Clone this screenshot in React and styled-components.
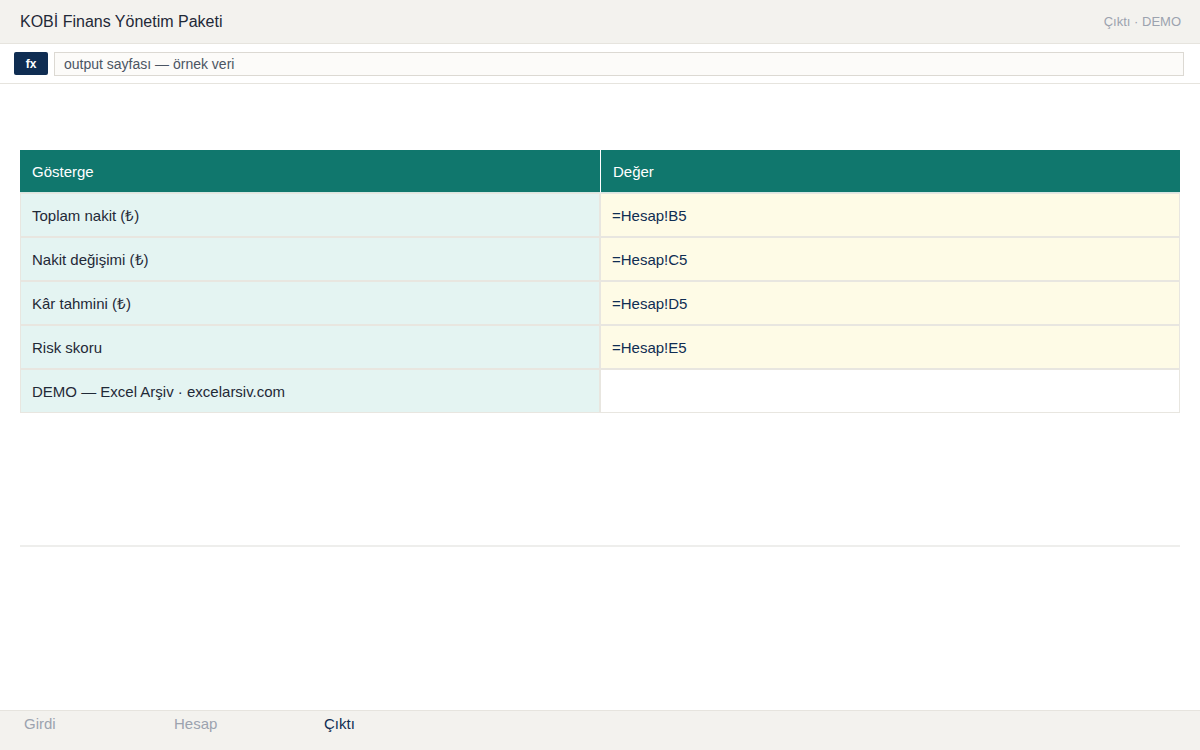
import React from "react";
import styled, { createGlobalStyle } from "styled-components";

const Global = createGlobalStyle`
  html, body { margin: 0; padding: 0; }
  body {
    font-family: "Liberation Sans", Arial, sans-serif;
    background: #fff;
  }
  * { box-sizing: border-box; }
`;

const Page = styled.div`
  height: 750px;
  display: flex;
  flex-direction: column;
`;

const Header = styled.header`
  height: 44px;
  flex-shrink: 0;
  background: #f3f2ee;
  border-bottom: 1px solid #e6e4de;
  display: flex;
  align-items: center;
  justify-content: space-between;
  padding: 0 19px 0 20px;
`;

const Title = styled.h1`
  margin: 0;
  font-size: 16px;
  font-weight: 400;
  color: #1f2937;
`;

const Meta = styled.span`
  font-size: 13px;
  color: #9ca3af;
`;

const FormulaBar = styled.div`
  height: 40px;
  flex-shrink: 0;
  border-bottom: 1px solid #e6e4de;
  display: flex;
  align-items: center;
  gap: 6px;
  padding: 0 16px 0 14px;
`;

const FxButton = styled.span`
  width: 34px;
  height: 23px;
  border-radius: 2px;
  background: #0f2d52;
  color: #fff;
  font-size: 12px;
  font-weight: 700;
  display: flex;
  align-items: center;
  justify-content: center;
`;

const FormulaInput = styled.div`
  flex: 1;
  height: 24px;
  border: 1px solid #dcd9d3;
  background: #fcfbf9;
  font-size: 14px;
  color: #4b5563;
  display: flex;
  align-items: center;
  padding: 0 9px;
`;

const Main = styled.main`
  flex: 1;
  padding: 66px 20px 0;
`;

const Table = styled.table`
  width: 100%;
  border-collapse: separate;
  border-spacing: 0;
  table-layout: fixed;
  font-size: 15px;
`;

const Th = styled.th`
  height: 43px;
  background: #10776d;
  color: #fff;
  font-weight: 400;
  text-align: left;
  padding: 0 12px;
  border-left: ${(p) => (p.$first ? "none" : "1px solid #fff")};
  border-bottom: 1px solid #d6e6e2;
`;

const Td = styled.td`
  height: 44px;
  padding: 0 11px;
  background: ${(p) => p.$bg};
  color: ${(p) => p.$color};
  border: 1px solid #e8e6e0;
`;

const Divider = styled.hr`
  margin: 132px 0 0;
  border: none;
  border-top: 2px solid #eeeeec;
`;

const Tabs = styled.nav`
  height: 40px;
  flex-shrink: 0;
  background: #f3f2ee;
  border-top: 1px solid #e6e4de;
  display: flex;
`;

const Tab = styled.span`
  width: 150px;
  padding: 4px 0 0 24px;
  font-size: 15px;
  color: ${(p) => (p.$active ? "#0f2d52" : "#9ca3af")};
`;

const rows = [
  ["Toplam nakit (₺)", "=Hesap!B5"],
  ["Nakit değişimi (₺)", "=Hesap!C5"],
  ["Kâr tahmini (₺)", "=Hesap!D5"],
  ["Risk skoru", "=Hesap!E5"],
];

export default function App() {
  return (
    <Page>
      <Global />
      <Header>
        <Title>KOBİ Finans Yönetim Paketi</Title>
        <Meta>Çıktı · DEMO</Meta>
      </Header>
      <FormulaBar>
        <FxButton>fx</FxButton>
        <FormulaInput>output sayfası — örnek veri</FormulaInput>
      </FormulaBar>
      <Main>
        <Table>
          <thead>
            <tr>
              <Th $first>Gösterge</Th>
              <Th>Değer</Th>
            </tr>
          </thead>
          <tbody>
            {rows.map(([label, value]) => (
              <tr key={label}>
                <Td $bg="#e4f4f2" $color="#1f2937">{label}</Td>
                <Td $bg="#fefbe6" $color="#0f2d52">{value}</Td>
              </tr>
            ))}
            <tr>
              <Td $bg="#e4f4f2" $color="#1f2937">DEMO — Excel Arşiv · excelarsiv.com</Td>
              <Td $bg="#fff" $color="#0f2d52"></Td>
            </tr>
          </tbody>
        </Table>
        <Divider />
      </Main>
      <Tabs>
        <Tab>Girdi</Tab>
        <Tab>Hesap</Tab>
        <Tab $active>Çıktı</Tab>
      </Tabs>
    </Page>
  );
}
